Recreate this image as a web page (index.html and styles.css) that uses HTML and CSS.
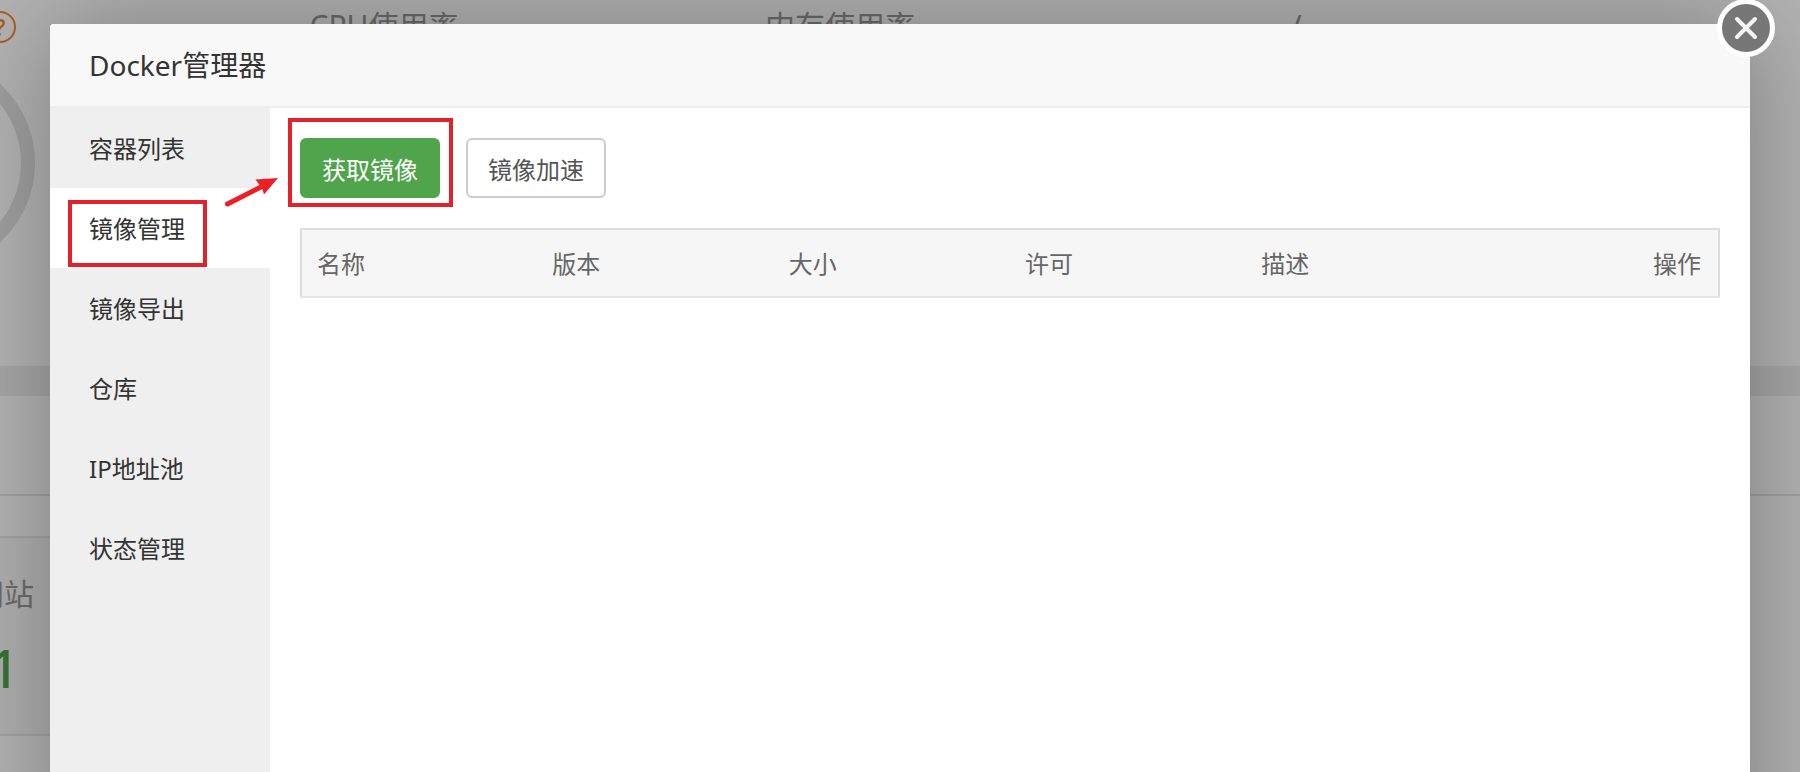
FILE: index.html
```
<!DOCTYPE html>
<html lang="zh-CN">
<head>
    <meta charset="UTF-8">
    <meta name="viewport" content="width=device-width, initial-scale=1.0">
    <title>Docker管理器</title>
    <link rel="stylesheet" href="styles.css">
</head>
<body>
    <div class="page">
        <div class="status">
            <div class="status-item">
                <h3 class="load"><a class="help" href="#">?</a></h3>
                <div class="gauge"></div>
            </div>
            <div class="status-item"><h3>CPU使用率</h3></div>
            <div class="status-item"><h3>内存使用率</h3></div>
            <div class="status-item"><h3>/</h3></div>
        </div>
        <div class="overview">
            <div class="overview-title"></div>
            <div class="overview-card">
                <p>网站</p>
                <a href="#">1</a>
            </div>
        </div>
    </div>
    <div class="shade"></div>

    <div class="layer" role="dialog" aria-labelledby="layer-title">
        <h2 class="layer-title" id="layer-title">Docker管理器</h2>
        <button class="layer-close" type="button" aria-label="关闭">
            <svg width="60" height="60" viewBox="0 0 60 60">
                <circle cx="30" cy="30" r="26.500" fill="#777" stroke="#fff" stroke-width="5"/>
                <path d="M21 21l18 18M39 21l-18 18" stroke="#f4f4f4" stroke-width="4" stroke-linecap="round"/>
            </svg>
        </button>
        <div class="layer-body">
            <nav class="menu">
                <a href="#">容器列表</a>
                <a href="#" class="on">镜像管理<span class="mark mark-menu"></span></a>
                <a href="#">镜像导出</a>
                <a href="#">仓库</a>
                <a href="#">IP地址池</a>
                <a href="#">状态管理</a>
            </nav>
            <svg class="arrow" width="54" height="32" viewBox="0 0 54 32">
                <path d="M3.500 28L38 10.500" stroke="#ec1f27" stroke-width="5" stroke-linecap="round"/>
                <path d="M54 2L31.500 3.500L35.500 9L38.500 13.500L40 18.500Z" fill="#ec1f27"/>
            </svg>
            <div class="content">
                <div class="toolbar">
                    <div class="btn-wrap">
                        <button class="btn btn-success" type="button">获取镜像</button>
                        <span class="mark mark-btn"></span>
                    </div>
                    <button class="btn" type="button">镜像加速</button>
                </div>
                <table class="table">
                    <thead>
                        <tr>
                            <th>名称</th>
                            <th>版本</th>
                            <th>大小</th>
                            <th>许可</th>
                            <th>描述</th>
                            <th class="right">操作</th>
                        </tr>
                    </thead>
                </table>
            </div>
        </div>
    </div>
</body>
</html>
```
FILE: styles.css
```
* {
    box-sizing: border-box;
}
body {
    margin: 0;
    height: 100vh;
    overflow: hidden;
    position: relative;
    font-family: "Noto Sans", "Noto Sans CJK SC", sans-serif;
    font-size: 24px;
    color: #333;
    background: #fff;
}
h2, h3, p {
    margin: 0;
    font-weight: 400;
}
a {
    color: inherit;
    text-decoration: none;
}

/* panel behind the dialog, scrolled to the right */
.page {
    margin-left: -300px;
}
.status {
    display: grid;
    grid-template-columns: repeat(4, 456px);
    height: 366px;
}
.status-item {
    display: flex;
    flex-direction: column;
    align-items: center;
    gap: 6px;
    padding-top: 4px;
}
.status-item h3 {
    height: 46px;
    font-size: 30px;
    line-height: 44px;
    color: #999;
}
.status-item .load {
    display: flex;
    align-items: center;
    justify-content: flex-end;
    width: 176px;
}
.help {
    width: 32px;
    height: 32px;
    border: 2px solid #f68630;
    border-radius: 50%;
    font-size: 24px;
    font-weight: 500;
    line-height: 28px;
    text-align: center;
    color: #f68630;
}
.gauge {
    width: 214px;
    height: 214px;
    border: 14px solid #e2e2e2;
    border-radius: 50%;
}
.overview {
    border-top: 30px solid #eee;
}
.overview-title {
    height: 100px;
    border-bottom: 2px solid #e6e6e6;
}
.overview-card {
    width: 528px;
    height: 200px;
    margin: 40px;
    padding-top: 34px;
    border: 2px solid #eaeaea;
    background: #fafafa;
    text-align: center;
    font-size: 30px;
    line-height: 44px;
    color: #999;
}
.overview-card a {
    display: block;
    font-size: 52px;
    font-weight: 500;
    line-height: 104px;
    color: #50a44c;
}
.shade {
    position: absolute;
    inset: 0;
    background: rgba(0, 0, 0, 0.3);
}

/* dialog, runs on below the fold */
.layer {
    position: absolute;
    top: 24px;
    left: 50px;
    right: 50px;
    bottom: -100px;
    display: flex;
    flex-direction: column;
    border-radius: 4px 4px 0 0;
    background: #fff;
    box-shadow: 2px 2px 100px rgba(0, 0, 0, 0.3);
}
.layer-title {
    height: 84px;
    padding-left: 39px;
    border-bottom: 2px solid #eee;
    border-radius: 4px 4px 0 0;
    background: #f8f8f8;
    font-size: 28px;
    line-height: 82px;
}
.layer-close {
    position: absolute;
    top: -26px;
    right: -26px;
    width: 60px;
    height: 60px;
    padding: 0;
    border: 0;
    background: none;
    cursor: pointer;
}
.layer-close svg {
    display: block;
}
.layer-body {
    position: relative;
    display: flex;
    flex: 1;
}
.menu {
    width: 220px;
    background: #efefef;
}
.menu a {
    position: relative;
    display: block;
    height: 80px;
    padding-left: 39px;
    line-height: 82px;
}
.menu .on {
    background: #fff;
}
.content {
    flex: 1;
    padding: 30px;
}
.toolbar {
    display: flex;
    gap: 26px;
    margin-bottom: 30px;
}
.btn-wrap {
    position: relative;
}
.btn {
    display: block;
    width: 140px;
    height: 60px;
    padding: 0;
    border: 2px solid #ccc;
    border-radius: 6px;
    background: #fff;
    color: #555;
    font-family: inherit;
    font-size: 24px;
    cursor: pointer;
}
.btn-success {
    border-color: #50a44c;
    background: #50a44c;
    color: #fff;
}
.table {
    width: 100%;
    table-layout: fixed;
    border-collapse: collapse;
    border: 2px solid #ddd;
    border-bottom-color: #e5e5e5;
}
.table th {
    height: 68px;
    padding: 0 15px 2px;
    background: #f6f6f6;
    color: #666;
    font-weight: 400;
    text-align: left;
}
.table .right {
    padding-right: 17px;
    text-align: right;
}

/* red guide marks */
.mark {
    position: absolute;
    border: 4px solid #e32128;
    pointer-events: none;
}
.mark-menu {
    top: 12px;
    left: 18px;
    width: 139px;
    height: 67px;
}
.mark-btn {
    top: -20px;
    left: -12px;
    width: 165px;
    height: 89px;
}
.arrow {
    position: absolute;
    top: 68px;
    left: 174px;
}
```
